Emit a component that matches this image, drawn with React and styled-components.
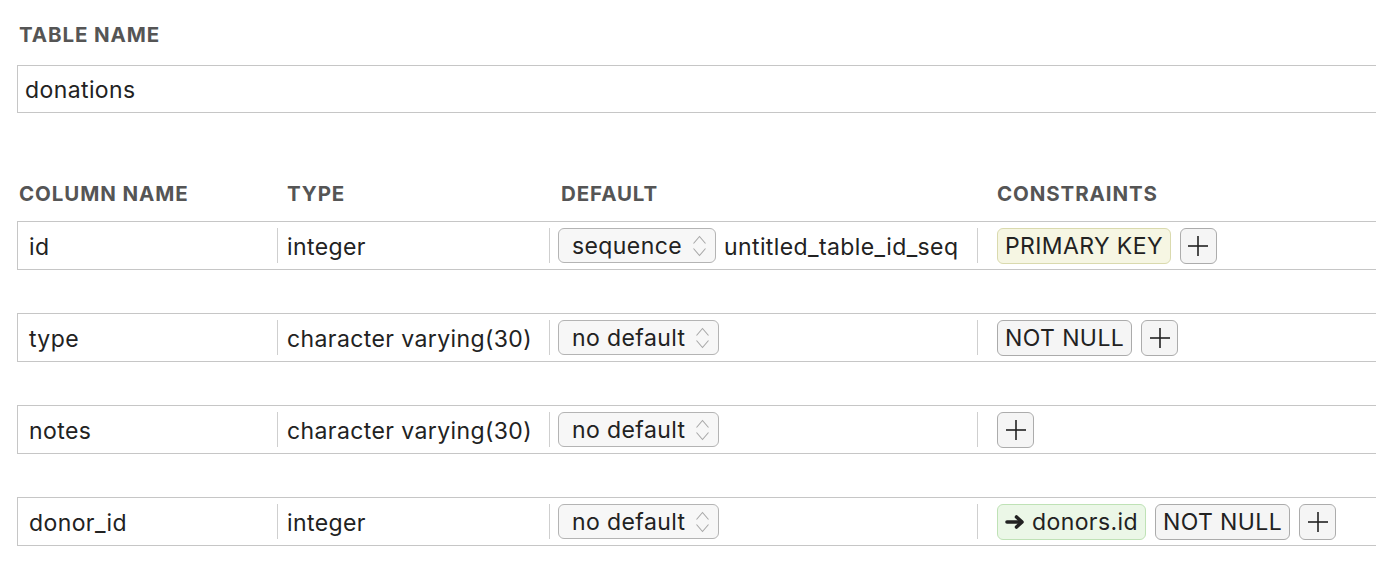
import React from "react";
import styled, { createGlobalStyle } from "styled-components";

const Global = createGlobalStyle`
  html, body { margin: 0; padding: 0; background: #fff; overflow: hidden; }
  body { font-family: Inter, "Noto Sans", "DejaVu Sans", sans-serif; color: #222; }
`;

const Page = styled.div`
  padding: 23px 0 0 17px;
  width: 1420px;
`;

const Label = styled.div`
  font-size: 20.5px;
  line-height: 23px;
  font-weight: 700;
  letter-spacing: 0.9px;
  color: #555;
  padding-left: 2px;
  margin-bottom: 19px;
`;

const NameInput = styled.div`
  box-sizing: border-box;
  height: 48px;
  border: 1px solid #c6c6c6;
  display: flex;
  align-items: center;
  padding: 2px 0 0 7px;
  font-size: 23px;
  letter-spacing: 0.4px;
  color: #222;
`;

const cols = "259px 272px 428px 1fr";

const HeaderRow = styled.div`
  display: grid;
  grid-template-columns: ${cols};
  margin-top: 69px;
  margin-bottom: 16px;
  padding-left: 1px;
`;

const HeaderCell = styled.div`
  font-size: 20.5px;
  line-height: 23px;
  font-weight: 700;
  letter-spacing: 0.9px;
  color: #555;
  white-space: nowrap;
  padding-left: ${(p) => p.$pad}px;
`;

const Row = styled.div`
  box-sizing: border-box;
  display: grid;
  grid-template-columns: ${cols};
  height: 49px;
  border: 1px solid #c6c6c6;
  margin-bottom: 43px;
`;

const Cell = styled.div`
  display: flex;
  align-items: center;
  font-size: 23px;
  letter-spacing: 0.4px;
  color: #222;
  white-space: nowrap;
  padding-left: ${(p) => p.$pad || 0}px;
`;

const Text = styled.span`
  padding-top: 3px;
`;

const Divider = styled.span`
  width: 1px;
  height: 35px;
  background: #cfcfcf;
  flex: none;
  margin-right: ${(p) => p.$gap}px;
`;

const Select = styled.div`
  box-sizing: border-box;
  height: 35px;
  display: inline-flex;
  align-items: center;
  gap: 10px;
  padding: 0 8px 0 13px;
  border: 1px solid #b4b4b4;
  border-radius: 6px;
  background: #f7f7f7;
  font-size: 23px;
  color: #222;
`;

const SelectValue = styled.span`
  margin-left: 8px;
  padding-top: 2px;
`;

const Pills = styled.div`
  display: flex;
  align-items: center;
  gap: 9px;
`;

const Pill = styled.div`
  box-sizing: border-box;
  height: 36px;
  display: inline-flex;
  align-items: center;
  gap: 7px;
  padding: 1px 7px 0;
  border: 1.5px solid ${(p) => p.$border};
  border-radius: 6px;
  background: ${(p) => p.$bg};
  font-size: 23px;
  color: #222;
`;

const PlusButton = styled.div`
  box-sizing: border-box;
  width: 37px;
  height: 36px;
  display: inline-flex;
  align-items: center;
  justify-content: center;
  border: 1.5px solid #acacac;
  border-radius: 6px;
  background: #f5f5f5;
`;

const Chevrons = () => (
  <svg width="15" height="22" viewBox="0 0 15 22" fill="none" stroke="#a8a8a8" strokeWidth="1.1">
    <polyline points="1.5,8.5 7.5,1.5 13.5,8.5" />
    <polyline points="1.5,13.5 7.5,20.5 13.5,13.5" />
  </svg>
);

const Plus = () => (
  <svg width="22" height="22" viewBox="0 0 22 22" stroke="#222" strokeWidth="1.6">
    <line x1="1" y1="11" x2="21" y2="11" />
    <line x1="11" y1="1" x2="11" y2="21" />
  </svg>
);

const Arrow = () => (
  <svg width="20" height="14" viewBox="0 0 20 14" fill="none" stroke="#222" strokeWidth="3.6" strokeLinecap="round" strokeLinejoin="round">
    <line x1="2" y1="7" x2="16" y2="7" />
    <polyline points="11.5,2 17,7 11.5,12" />
  </svg>
);

const pillStyles = {
  pk: { bg: "#f6f6e3", border: "#dadaae" },
  fk: { bg: "#ebf7e7", border: "#bfe2b6" },
  nn: { bg: "#f5f5f5", border: "#ababab" },
};

const rows = [
  { name: "id", type: "integer", def: "sequence", value: "untitled_table_id_seq", cons: [{ k: "pk", t: "PRIMARY KEY" }] },
  { name: "type", type: "character varying(30)", def: "no default", cons: [{ k: "nn", t: "NOT NULL" }] },
  { name: "notes", type: "character varying(30)", def: "no default", cons: [] },
  { name: "donor_id", type: "integer", def: "no default", cons: [{ k: "fk", t: "donors.id", arrow: true }, { k: "nn", t: "NOT NULL" }] },
];

export default function App() {
  return (
    <>
      <Global />
      <Page>
        <Label>TABLE NAME</Label>
        <NameInput>donations</NameInput>
        <HeaderRow>
          <HeaderCell $pad={1}>COLUMN NAME</HeaderCell>
          <HeaderCell $pad={10}>TYPE</HeaderCell>
          <HeaderCell $pad={12}>DEFAULT</HeaderCell>
          <HeaderCell $pad={20}>CONSTRAINTS</HeaderCell>
        </HeaderRow>
        {rows.map((r) => (
          <Row key={r.name}>
            <Cell $pad={11}>
              <Text>{r.name}</Text>
            </Cell>
            <Cell>
              <Divider $gap={9} />
              <Text>{r.type}</Text>
            </Cell>
            <Cell>
              <Divider $gap={8} />
              <Select>
                {r.def}
                <Chevrons />
              </Select>
              {r.value && <SelectValue>{r.value}</SelectValue>}
            </Cell>
            <Cell>
              <Divider $gap={19} />
              <Pills>
                {r.cons.map((c) => (
                  <Pill key={c.t} $bg={pillStyles[c.k].bg} $border={pillStyles[c.k].border}>
                    {c.arrow && <Arrow />}
                    {c.t}
                  </Pill>
                ))}
                <PlusButton>
                  <Plus />
                </PlusButton>
              </Pills>
            </Cell>
          </Row>
        ))}
      </Page>
    </>
  );
}
